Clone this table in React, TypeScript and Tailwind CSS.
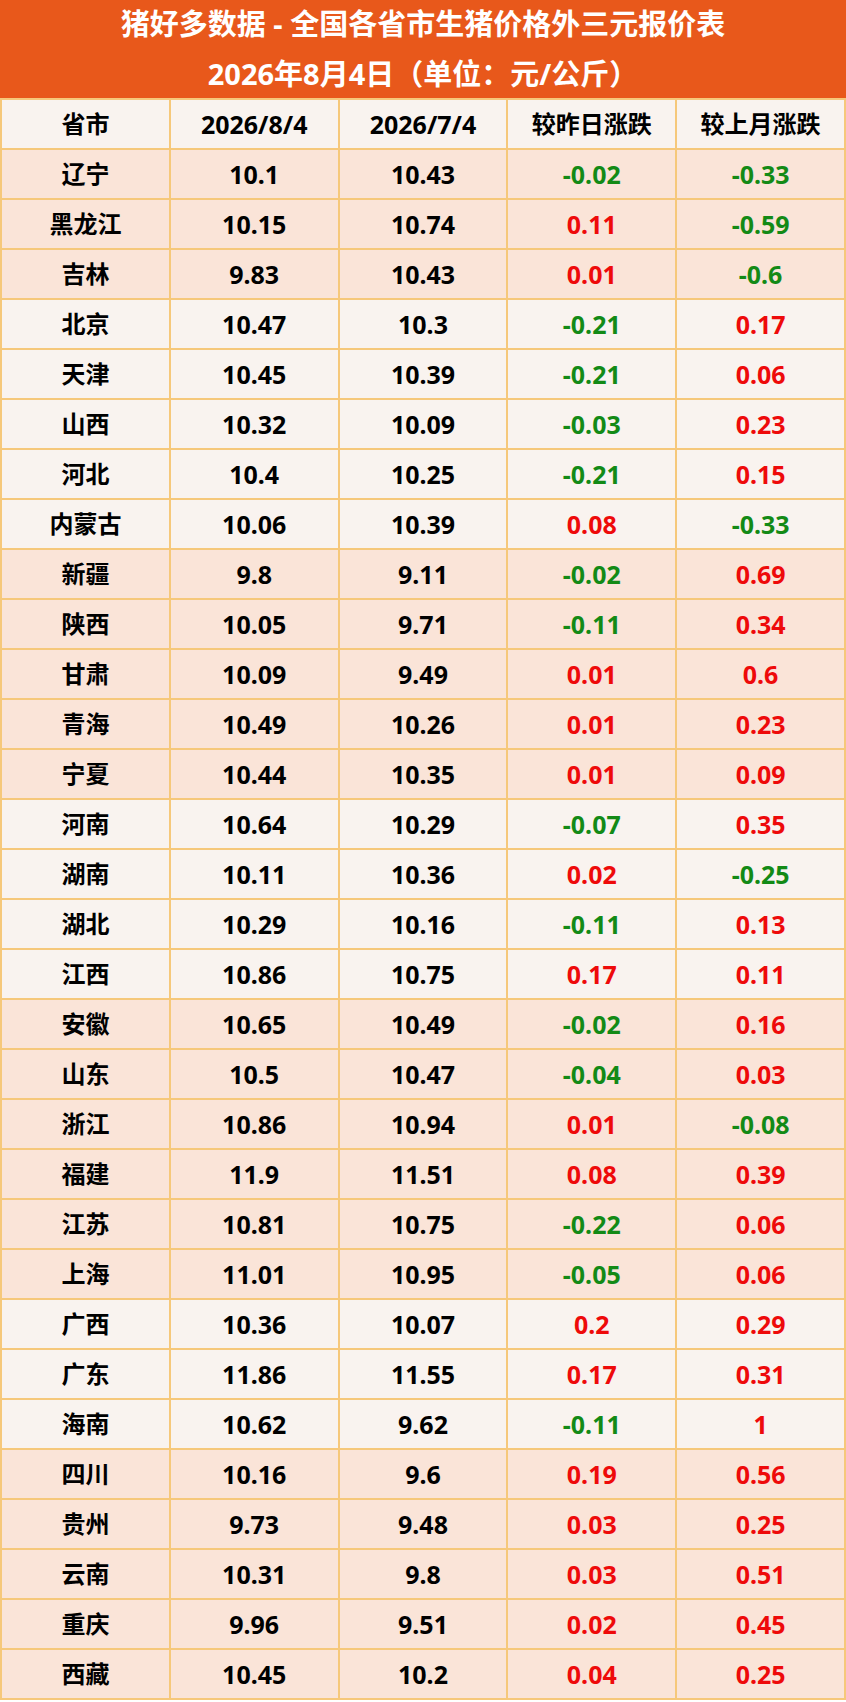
import React from 'react';

type Row = [string, string, string, string, string];

// 各地区分组，用于行底色
const groups: { tone: 'peach' | 'light'; rows: Row[] }[] = [
  {
    tone: 'peach',
    rows: [
      ['辽宁', '10.1', '10.43', '-0.02', '-0.33'],
      ['黑龙江', '10.15', '10.74', '0.11', '-0.59'],
      ['吉林', '9.83', '10.43', '0.01', '-0.6'],
    ],
  },
  {
    tone: 'light',
    rows: [
      ['北京', '10.47', '10.3', '-0.21', '0.17'],
      ['天津', '10.45', '10.39', '-0.21', '0.06'],
      ['山西', '10.32', '10.09', '-0.03', '0.23'],
      ['河北', '10.4', '10.25', '-0.21', '0.15'],
      ['内蒙古', '10.06', '10.39', '0.08', '-0.33'],
    ],
  },
  {
    tone: 'peach',
    rows: [
      ['新疆', '9.8', '9.11', '-0.02', '0.69'],
      ['陕西', '10.05', '9.71', '-0.11', '0.34'],
      ['甘肃', '10.09', '9.49', '0.01', '0.6'],
      ['青海', '10.49', '10.26', '0.01', '0.23'],
      ['宁夏', '10.44', '10.35', '0.01', '0.09'],
    ],
  },
  {
    tone: 'light',
    rows: [
      ['河南', '10.64', '10.29', '-0.07', '0.35'],
      ['湖南', '10.11', '10.36', '0.02', '-0.25'],
      ['湖北', '10.29', '10.16', '-0.11', '0.13'],
      ['江西', '10.86', '10.75', '0.17', '0.11'],
    ],
  },
  {
    tone: 'peach',
    rows: [
      ['安徽', '10.65', '10.49', '-0.02', '0.16'],
      ['山东', '10.5', '10.47', '-0.04', '0.03'],
      ['浙江', '10.86', '10.94', '0.01', '-0.08'],
      ['福建', '11.9', '11.51', '0.08', '0.39'],
      ['江苏', '10.81', '10.75', '-0.22', '0.06'],
      ['上海', '11.01', '10.95', '-0.05', '0.06'],
    ],
  },
  {
    tone: 'light',
    rows: [
      ['广西', '10.36', '10.07', '0.2', '0.29'],
      ['广东', '11.86', '11.55', '0.17', '0.31'],
      ['海南', '10.62', '9.62', '-0.11', '1'],
    ],
  },
  {
    tone: 'peach',
    rows: [
      ['四川', '10.16', '9.6', '0.19', '0.56'],
      ['贵州', '9.73', '9.48', '0.03', '0.25'],
      ['云南', '10.31', '9.8', '0.03', '0.51'],
      ['重庆', '9.96', '9.51', '0.02', '0.45'],
      ['西藏', '10.45', '10.2', '0.04', '0.25'],
    ],
  },
];

const cell =
  'flex items-center justify-center border-l-2 border-[#f6c87a] font-bold leading-none';
const label = `${cell} text-[24px]`;
const num = `${cell} text-[25px]`;

function changeColor(v: string) {
  return v.startsWith('-') ? 'text-[#138a16]' : 'text-[#ee0a0a]';
}

export default function App() {
  return (
    <div
      className="w-[846px] h-[1702px] bg-white text-black"
      style={{ fontFamily: '"Noto Sans", "Noto Sans CJK SC", sans-serif' }}
    >
      {/* Title */}
      <div className="h-[98px] bg-[#e8581b] flex flex-col items-center justify-center gap-[21px] pb-[2px] text-white text-[29px] font-bold leading-none">
        <div>猪好多数据 - 全国各省市生猪价格外三元报价表</div>
        <div>2026年8月4日（单位：元/公斤）</div>
      </div>

      <div className="border-t-2 border-r-2 border-[#f6c87a]">
        {/* Header */}
        <div className="grid grid-cols-5 h-[50px] bg-[#f9f3ef] border-b-2 border-[#f6c87a]">
          <div className={label}>省市</div>
          <div className={num}>2026/8/4</div>
          <div className={num}>2026/7/4</div>
          <div className={label}>较昨日涨跌</div>
          <div className={label}>较上月涨跌</div>
        </div>

        {groups.map((g) =>
          g.rows.map((r) => (
            <div
              key={r[0]}
              className={`grid grid-cols-5 h-[50px] border-b-2 border-[#f6c87a] ${
                g.tone === 'peach' ? 'bg-[#fae4d8]' : 'bg-[#f9f3ef]'
              }`}
            >
              <div className={label}>{r[0]}</div>
              <div className={num}>{r[1]}</div>
              <div className={num}>{r[2]}</div>
              <div className={`${num} ${changeColor(r[3])}`}>{r[3]}</div>
              <div className={`${num} ${changeColor(r[4])}`}>{r[4]}</div>
            </div>
          ))
        )}
      </div>
    </div>
  );
}
